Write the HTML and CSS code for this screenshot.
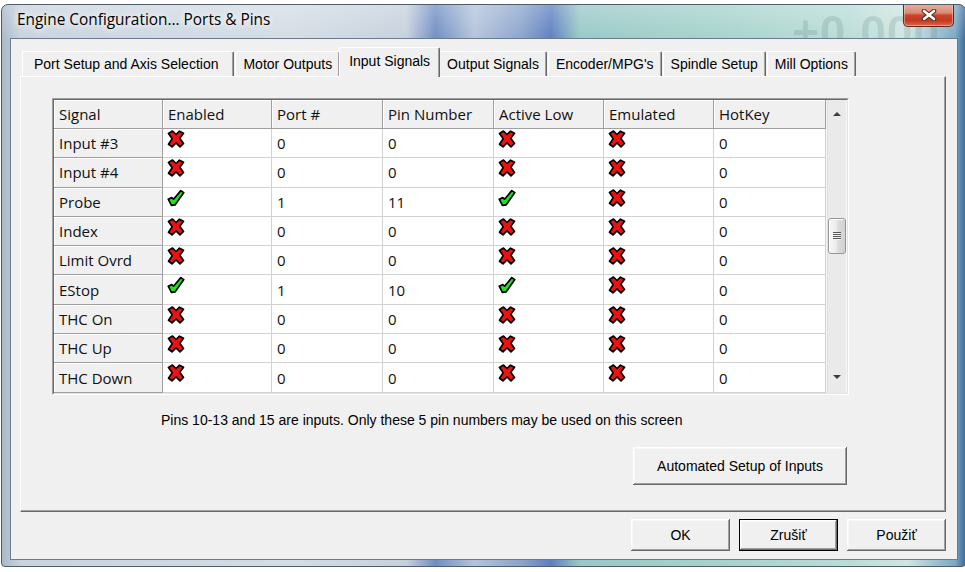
FILE: index.html
```html
<!DOCTYPE html>
<html lang="en">
<head>
<meta charset="utf-8">
<title>Engine Configuration... Ports &amp; Pins</title>
<link rel="stylesheet" href="styles.css">
</head>
<body>
<svg class="defs" width="0" height="0" aria-hidden="true">
  <symbol id="ico-x" viewBox="0 0 18 18">
    <polygon points="1.5,3.5 5.5,1 9,4.5 12.5,1.2 16.5,3.2 12.8,8.3 16.5,13.5 13,16.8 9,12.8 5,16.8 1.5,14.3 5.2,8.8" fill="#f01010" stroke="#000" stroke-width="1.7" stroke-linejoin="round"/>
  </symbol>
  <symbol id="ico-ok" viewBox="0 0 18 18">
    <polygon points="1.2,10.2 4.8,8.6 6.6,10.2 13.8,1.6 16.8,3.6 8.2,15.8 4.4,16.4" fill="#22e022" stroke="#000" stroke-width="1.7" stroke-linejoin="round"/>
  </symbol>
</svg>

<div class="window">
  <div class="titlebar">
    <span class="title">Engine Configuration... Ports &amp; Pins</span>
    <span class="bg-digits" aria-hidden="true">+0.000</span>
    <button class="close" aria-label="Close">
      <svg width="16" height="12" viewBox="0 0 16 12"><path d="M3 2 L13 10 M13 2 L3 10" stroke="#4a2a24" stroke-width="4.5" stroke-linecap="round"/><path d="M3 2 L13 10 M13 2 L3 10" stroke="#fff" stroke-width="2.6" stroke-linecap="round"/></svg>
    </button>
  </div>

  <div class="client">
    <div class="tabs">
      <div class="tab tab-first">Port Setup and Axis Selection</div>
      <div class="tab">Motor Outputs</div>
      <div class="tab tab-active">Input Signals</div>
      <div class="tab">Output Signals</div>
      <div class="tab">Encoder/MPG's</div>
      <div class="tab">Spindle Setup</div>
      <div class="tab">Mill Options</div>
    </div>

    <div class="panel">
      <div class="gridwrap">
        <div class="gridinner">
          <div class="grid">
            <div class="h">Signal</div><div class="h">Enabled</div><div class="h">Port #</div><div class="h">Pin Number</div><div class="h">Active Low</div><div class="h">Emulated</div><div class="h">HotKey</div>

            <div class="r">Input #3</div><div class="c ic"><svg class="i"><use href="#ico-x"/></svg></div><div class="c">0</div><div class="c">0</div><div class="c ic"><svg class="i"><use href="#ico-x"/></svg></div><div class="c ic"><svg class="i"><use href="#ico-x"/></svg></div><div class="c">0</div>

            <div class="r">Input #4</div><div class="c ic"><svg class="i"><use href="#ico-x"/></svg></div><div class="c">0</div><div class="c">0</div><div class="c ic"><svg class="i"><use href="#ico-x"/></svg></div><div class="c ic"><svg class="i"><use href="#ico-x"/></svg></div><div class="c">0</div>

            <div class="r">Probe</div><div class="c ic"><svg class="i"><use href="#ico-ok"/></svg></div><div class="c">1</div><div class="c">11</div><div class="c ic"><svg class="i"><use href="#ico-ok"/></svg></div><div class="c ic"><svg class="i"><use href="#ico-x"/></svg></div><div class="c">0</div>

            <div class="r">Index</div><div class="c ic"><svg class="i"><use href="#ico-x"/></svg></div><div class="c">0</div><div class="c">0</div><div class="c ic"><svg class="i"><use href="#ico-x"/></svg></div><div class="c ic"><svg class="i"><use href="#ico-x"/></svg></div><div class="c">0</div>

            <div class="r">Limit Ovrd</div><div class="c ic"><svg class="i"><use href="#ico-x"/></svg></div><div class="c">0</div><div class="c">0</div><div class="c ic"><svg class="i"><use href="#ico-x"/></svg></div><div class="c ic"><svg class="i"><use href="#ico-x"/></svg></div><div class="c">0</div>

            <div class="r">EStop</div><div class="c ic"><svg class="i"><use href="#ico-ok"/></svg></div><div class="c">1</div><div class="c">10</div><div class="c ic"><svg class="i"><use href="#ico-ok"/></svg></div><div class="c ic"><svg class="i"><use href="#ico-x"/></svg></div><div class="c">0</div>

            <div class="r">THC On</div><div class="c ic"><svg class="i"><use href="#ico-x"/></svg></div><div class="c">0</div><div class="c">0</div><div class="c ic"><svg class="i"><use href="#ico-x"/></svg></div><div class="c ic"><svg class="i"><use href="#ico-x"/></svg></div><div class="c">0</div>

            <div class="r">THC Up</div><div class="c ic"><svg class="i"><use href="#ico-x"/></svg></div><div class="c">0</div><div class="c">0</div><div class="c ic"><svg class="i"><use href="#ico-x"/></svg></div><div class="c ic"><svg class="i"><use href="#ico-x"/></svg></div><div class="c">0</div>

            <div class="r">THC Down</div><div class="c ic"><svg class="i"><use href="#ico-x"/></svg></div><div class="c">0</div><div class="c">0</div><div class="c ic"><svg class="i"><use href="#ico-x"/></svg></div><div class="c ic"><svg class="i"><use href="#ico-x"/></svg></div><div class="c">0</div>
          </div>
          <div class="vscroll">
            <div class="sb-up"><span class="arr-up"></span></div>
            <div class="sb-track"><div class="thumb"><span class="grip"></span></div></div>
            <div class="sb-down"><span class="arr-down"></span></div>
          </div>
        </div>
      </div>

      <p class="note">Pins 10-13 and 15 are inputs. Only these 5 pin numbers may be used on this screen</p>

      <div class="auto-row">
        <button class="btn btn-auto">Automated Setup of Inputs</button>
      </div>
    </div>

    <div class="footer">
      <button class="btn btn-foot">OK</button>
      <button class="btn btn-foot btn-default">Zrušiť</button>
      <button class="btn btn-foot">Použiť</button>
    </div>
  </div>
</div>
</body>
</html>
```

FILE: styles.css
```css
html, body {
  margin: 0;
  padding: 0;
  background: #ffffff;
  overflow: hidden;
}

.defs {
  position: absolute;
  width: 0;
  height: 0;
}

.window {
  margin: 4px 0 0 1px;
  width: 965px;
  height: 563px;
  box-sizing: border-box;
  border: 1px solid #4f5d6b;
  border-radius: 7px 7px 4px 4px;
  display: flex;
  flex-direction: column;
  position: relative;
  overflow: hidden;
  background:
    linear-gradient(180deg, rgba(255,255,255,0.25) 0, rgba(255,255,255,0) 36px),
    linear-gradient(90deg, #aab8c8 0, #c9d3de 2%, #d4dce5 30%, #c6d0dc 42%, #6f8dc4 45%, #b3c4da 49%, #8aa3cc 54%, #5d7fc0 57%, #98c8c6 60%, #a6d3cc 75%, #b9dcd7 88%, #cfe6e2 94%, #7aa8c4 99%, #3f6b9a 100%);
}

.titlebar {
  height: 33px;
  flex: none;
  display: flex;
  align-items: flex-start;
  position: relative;
}

.title {
  margin: 5px 0 0 15px;
  font-family: "Open Sans", "DejaVu Sans", sans-serif;
  font-size: 15.4px;
  line-height: 20px;
  color: #000;
  text-shadow: 0 0 6px #fff, 0 0 10px rgba(255,255,255,0.9);
  position: relative;
  z-index: 1;
}

.bg-digits {
  position: absolute;
  left: 790px;
  top: 4px;
  font-family: "Liberation Sans", sans-serif;
  font-size: 46px;
  font-weight: bold;
  line-height: 46px;
  color: rgba(60, 100, 100, 0.16);
  letter-spacing: 1px;
}

.close {
  margin: -1px 11px 0 auto;
  width: 51px;
  height: 23px;
  padding: 0;
  border: 1px solid #6e2218;
  border-top: none;
  border-radius: 0 0 5px 5px;
  background: linear-gradient(180deg, #e9b0a2 0, #dd8a74 40%, #c8442a 52%, #c23a20 75%, #d86a4e 100%);
  box-shadow: inset 0 0 0 1px rgba(255,220,210,0.45);
  display: flex;
  align-items: center;
  justify-content: center;
  position: relative;
  z-index: 1;
}

.client {
  margin: 0 7px 0 8px;
  height: 522px;
  box-sizing: border-box;
  border: 1px solid #6c7b89;
  background: #f0f0f0;
  padding: 8px 11px 8px 9px;
  display: flex;
  flex-direction: column;
  position: relative;
  z-index: 2;
}

/* Tabs */
.tabs {
  height: 29px;
  flex: none;
  display: flex;
  align-items: flex-end;
  gap: 1px;
  padding-left: 2px;
  font-family: "Liberation Sans", Arial, sans-serif;
  font-size: 14px;
  color: #000;
}

.tab {
  height: 25px;
  box-sizing: border-box;
  padding: 0 7px;
  display: flex;
  align-items: center;
  background: #f0f0f0;
  border-left: 1px solid #ffffff;
  border-top: 1px solid #ffffff;
  border-right: 1px solid #696969;
  box-shadow: inset -1px 0 0 #a0a0a0;
  border-radius: 2px 2px 0 0;
  white-space: nowrap;
}

.tab-first {
  padding: 0 15px 0 11px;
}

.tab-active {
  height: 30px;
  margin: 0 -2px -1px;
  padding: 0 9px 3px;
  position: relative;
  z-index: 2;
}

.panel {
  height: 436px;
  flex: none;
  box-sizing: border-box;
  border: 1px solid;
  border-color: #ffffff #696969 #696969 #ffffff;
  box-shadow: inset -1px -1px 0 #a0a0a0;
  padding: 21px 0 0 31px;
  display: flex;
  flex-direction: column;
}

/* Grid */
.gridwrap {
  width: 797px;
  box-sizing: border-box;
  border: 1px solid;
  border-color: #a0a0a0 #ffffff #ffffff #a0a0a0;
}

.gridinner {
  display: flex;
  border: 1px solid;
  border-color: #696969 #e3e3e3 #e3e3e3 #696969;
  background: #ffffff;
}

.grid {
  display: grid;
  grid-template-columns: 109px 109px 111px 111px 110px 110px 112px;
  grid-template-rows: 29px;
  grid-auto-rows: 29.3px;
  font-family: "Open Sans", "DejaVu Sans", sans-serif;
  font-size: 15px;
  color: #111;
}

.h, .r, .c {
  box-sizing: border-box;
  display: flex;
  align-items: center;
  padding: 0 0 0 5px;
  white-space: nowrap;
  overflow: hidden;
}

.h, .r {
  background: #f0f0f0;
  border-right: 1px solid #a0a0a0;
  border-bottom: 1px solid #a0a0a0;
  box-shadow: inset 1px 1px 0 #ffffff;
}

.c {
  background: #ffffff;
  border-right: 1px solid #d2d2d2;
  border-bottom: 1px solid #d2d2d2;
}

.c.ic {
  align-items: flex-start;
  padding: 1px 0 0 4px;
}

.i {
  width: 18px;
  height: 18px;
}

/* Scrollbar */
.vscroll {
  width: 21px;
  display: flex;
  flex-direction: column;
  background: #eaeaea;
  border-left: 1px solid #f4f4f4;
  box-shadow: inset -1px 0 0 #f6f6f6, inset 1px 0 0 #e2e2e2;
}

.sb-up {
  height: 24px;
  display: flex;
  align-items: flex-end;
  justify-content: center;
  padding-bottom: 8px;
  box-sizing: border-box;
}

.sb-down {
  height: 22px;
  display: flex;
  align-items: flex-start;
  justify-content: center;
  padding-top: 4px;
  box-sizing: border-box;
}

.arr-up {
  width: 0;
  height: 0;
  border-left: 4px solid transparent;
  border-right: 4px solid transparent;
  border-bottom: 4px solid #3c3c3c;
}

.arr-down {
  width: 0;
  height: 0;
  border-left: 4px solid transparent;
  border-right: 4px solid transparent;
  border-top: 4px solid #3c3c3c;
}

.sb-track {
  flex: 1;
  padding: 94px 1px 0 1px;
}

.thumb {
  height: 36px;
  box-sizing: border-box;
  border: 1px solid #979797;
  border-radius: 3px;
  background: linear-gradient(90deg, #f6f6f6 0, #ececec 45%, #dcdcdc 55%, #d2d2d2 100%);
  box-shadow: inset 1px 1px 0 #ffffff;
  display: flex;
  align-items: center;
  justify-content: center;
}

.grip {
  width: 8px;
  height: 8px;
  background: repeating-linear-gradient(180deg, #555 0, #555 1px, #f4f4f4 1px, #f4f4f4 2px);
}

.note {
  margin: 17px 0 0 109px;
  font-family: "Liberation Sans", Arial, sans-serif;
  font-size: 14px;
  line-height: 16px;
  color: #000;
}

.auto-row {
  display: flex;
  justify-content: flex-end;
  padding-right: 98px;
  margin-top: 19px;
}

.btn {
  font-family: "Liberation Sans", Arial, sans-serif;
  font-size: 14px;
  color: #000;
  background: #f0f0f0;
  border: none;
  padding: 0;
  box-shadow: inset -1px -1px 0 #696969, inset 1px 1px 0 #ffffff, inset -2px -2px 0 #a0a0a0, inset 2px 2px 0 #f8f8f8;
}

.btn-auto {
  width: 214px;
  height: 38px;
}

.footer {
  margin-top: 7px;
  display: flex;
  justify-content: flex-end;
  gap: 9px;
}

.btn-foot {
  width: 99px;
  height: 32px;
}

.btn-default {
  border: 1px solid #000;
}
```
